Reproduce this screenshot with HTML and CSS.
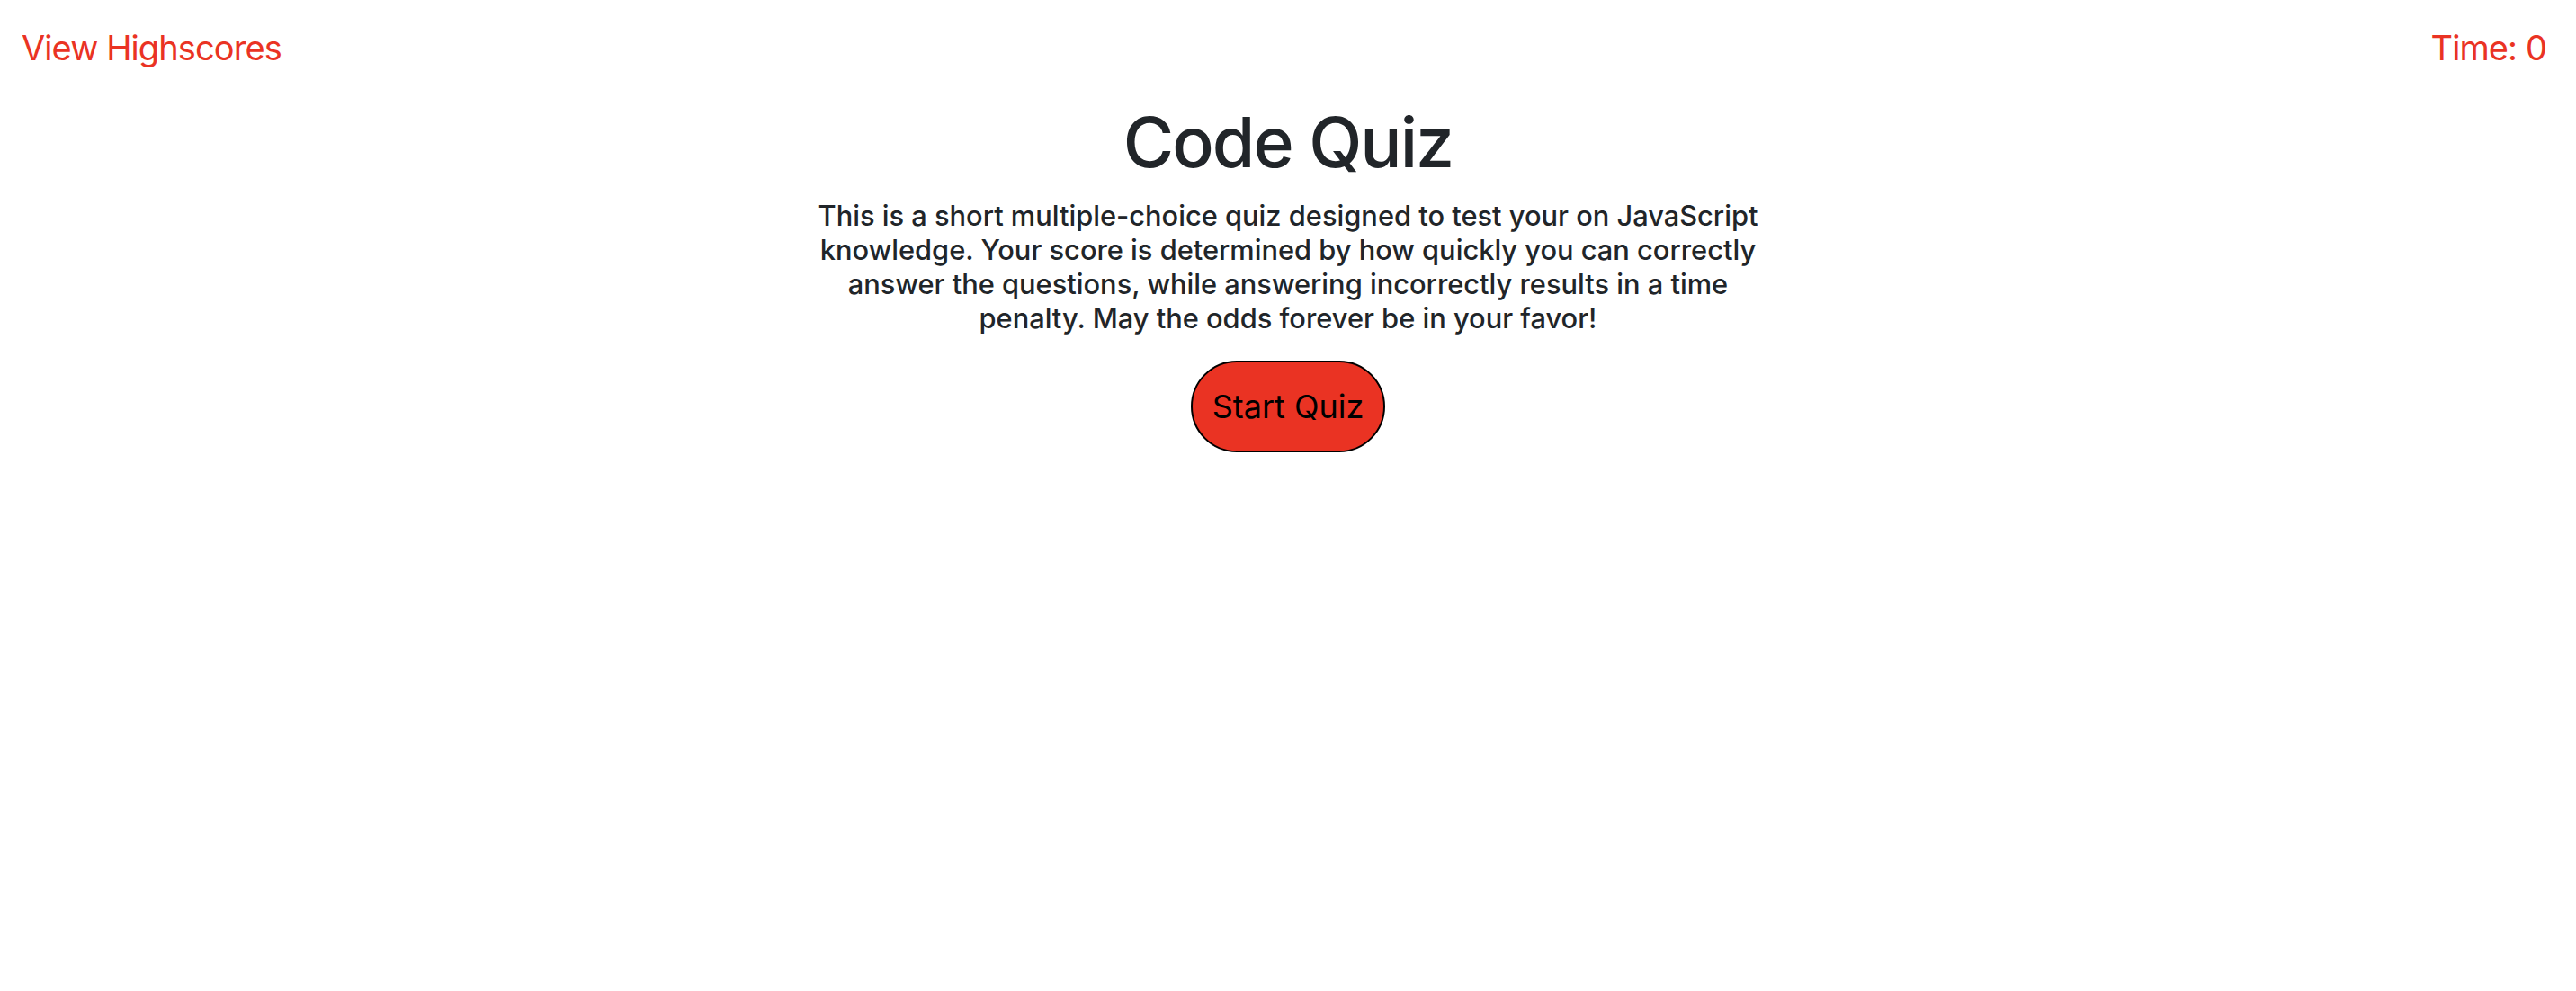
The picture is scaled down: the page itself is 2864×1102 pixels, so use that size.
FILE: index.html
```html
<!DOCTYPE html>
<html lang="en">
<head>
<meta charset="utf-8">
<title>Code Quiz</title>
<link rel="stylesheet" href="styles.css">
</head>
<body>
<header class="top-bar">
  <a class="highscores-link" href="#">View Highscores</a>
  <div class="timer">Time: <span class="timer-value">0</span></div>
</header>
<main class="intro">
  <h1 class="intro-title">Code Quiz</h1>
  <p class="intro-text">This is a short multiple-choice quiz designed to test your on JavaScript knowledge. Your score is determined by how quickly you can correctly answer the questions, while answering incorrectly results in a time penalty. May the odds forever be in your favor!</p>
  <button class="start-button" type="button">Start Quiz</button>
</main>
</body>
</html>
```

FILE: styles.css
```css
html, body {
  margin: 0;
  padding: 0;
  background: #ffffff;
}

body {
  font-family: Inter, "Noto Sans", "Liberation Sans", sans-serif;
  color: #212529;
}

.top-bar {
  display: flex;
  justify-content: space-between;
  align-items: flex-start;
  padding: 29px 33px 0 24px;
  font-size: 38px;
  line-height: 48px;
  letter-spacing: -0.9px;
  color: #ea3323;
}

.highscores-link {
  color: #ea3323;
  text-decoration: none;
}

.timer {
  color: #ea3323;
}

.intro {
  display: flex;
  flex-direction: column;
  align-items: center;
  text-align: center;
}

.intro-title {
  margin: 34px 0 0;
  font-size: 77px;
  line-height: 94px;
  letter-spacing: -2px;
  font-weight: 500;
  color: #212529;
}

.intro-text {
  margin: 16px 0 0;
  max-width: 1075px;
  font-size: 30.8px;
  line-height: 38px;
  font-weight: 500;
  color: #212529;
}

.start-button {
  margin-top: 28px;
  width: 216px;
  height: 102px;
  border: 2px solid #000000;
  border-radius: 51px;
  background: #ea3323;
  color: #000000;
  font-family: Inter, "Noto Sans", "Liberation Sans", sans-serif;
  font-size: 36px;
  padding: 0;
  cursor: pointer;
}
```
